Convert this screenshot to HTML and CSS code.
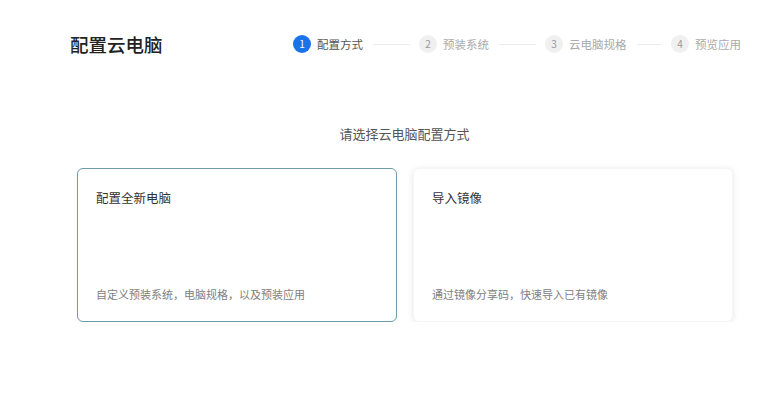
FILE: index.html
```html
<!DOCTYPE html>
<html lang="zh-CN">
<head>
<meta charset="utf-8">
<link rel="stylesheet" href="styles.css">
</head>
<body>
<header class="header">
  <h1 class="title">配置云电脑</h1>
  <ol class="steps">
    <li class="step active"><span class="dot">1</span><span class="label">配置方式</span><span class="line"></span></li>
    <li class="step"><span class="dot">2</span><span class="label">预装系统</span><span class="line"></span></li>
    <li class="step"><span class="dot">3</span><span class="label">云电脑规格</span><span class="line"></span></li>
    <li class="step last"><span class="dot">4</span><span class="label">预览应用</span></li>
  </ol>
</header>
<main class="main">
  <p class="subtitle">请选择云电脑配置方式</p>
  <div class="cards">
    <div class="card selected">
      <div class="card-title">配置全新电脑</div>
      <div class="card-desc">自定义预装系统，电脑规格，以及预装应用</div>
    </div>
    <div class="card">
      <div class="card-title">导入镜像</div>
      <div class="card-desc">通过镜像分享码，快速导入已有镜像</div>
    </div>
  </div>
</main>
</body>
</html>
```
FILE: styles.css
```css
* { box-sizing: border-box; }
body {
  margin: 0;
  background: #fff;
  font-family: "Noto Sans CJK SC", "Noto Sans", sans-serif;
  color: #333;
}
.header {
  display: flex;
  align-items: center;
  justify-content: space-between;
  padding: 32px 28px 0 70px;
  height: 56px;
}
.title {
  margin: 0;
  font-size: 18.5px;
  font-weight: 500;
  color: #222;
  line-height: 24px;
}
.steps {
  display: flex;
  width: 448px;
  margin: 0;
  padding: 0;
  list-style: none;
}
.step {
  flex: 1;
  display: flex;
  align-items: center;
}
.step.last { flex: none; }
.dot {
  width: 18px;
  height: 18px;
  border-radius: 50%;
  background: #f0f0f0;
  color: #999;
  font-size: 10px;
  line-height: 18px;
  text-align: center;
  flex: none;
}
.active .dot {
  background: #1a73e8;
  color: #fff;
}
.label {
  margin-left: 6px;
  font-size: 11.5px;
  color: #aaa;
  white-space: nowrap;
}
.active .label { color: #555; }
.line {
  flex: 1;
  height: 1px;
  background: #ececec;
  margin: 0 9px 0 10px;
}
.main {
  padding-top: 68px;
}
.subtitle {
  margin: 0;
  text-align: center;
  padding-left: 40px;
  font-size: 13px;
  color: #555;
  line-height: 20px;
}
.cards {
  display: flex;
  gap: 16px;
  padding-left: 77px;
  margin-top: 24px;
}
.card {
  width: 320px;
  height: 154px;
  border-radius: 6px;
  background: #fff;
  border: 1px solid #f6f6f6;
  box-shadow: 0 1px 6px rgba(0, 0, 0, 0.1);
  padding: 20px 18px 19px 18px;
  display: flex;
  flex-direction: column;
  justify-content: space-between;
}
.card.selected {
  border-color: #6f9bab;
  box-shadow: 0 1px 3px rgba(0, 0, 0, 0.05);
}
.card-title {
  font-size: 12.5px;
  color: #333;
  line-height: 18px;
}
.card-desc {
  font-size: 11px;
  color: #808080;
  line-height: 16px;
}
```
